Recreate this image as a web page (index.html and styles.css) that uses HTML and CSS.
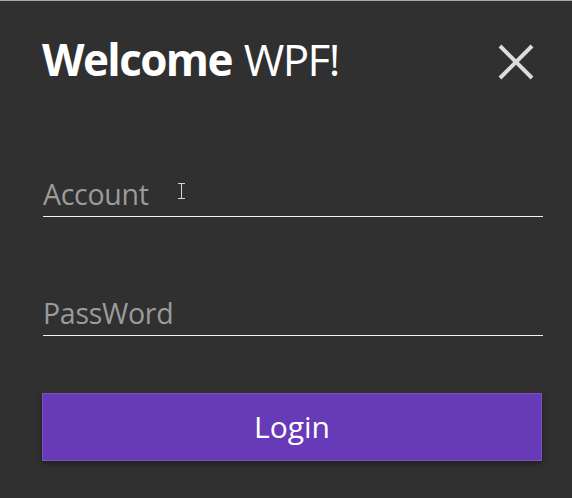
FILE: index.html
```html
<!DOCTYPE html>
<html>
<head>
<meta charset="utf-8">
<link rel="stylesheet" href="styles.css">
</head>
<body>
<div class="window">
  <div class="header">
    <h1 class="title"><b>Welcome</b> WPF!</h1>
    <button class="close" aria-label="Close">
      <svg width="36" height="36" viewBox="0 0 36 36"><path d="M2 2 L34 34 M34 2 L2 34" stroke="#dcdcdc" stroke-width="4" stroke-linecap="butt"/></svg>
    </button>
  </div>
  <div class="field field-account">
    <input class="input" type="text" placeholder="Account">
    <svg class="ibeam" width="7" height="16" viewBox="0 0 7 16"><path d="M0 0.5 H7 M0 15.5 H7 M3.5 0.5 V15.5" stroke="#d8d8d8" stroke-width="1" fill="none"/></svg>
  </div>
  <div class="field field-password">
    <input class="input" type="password" placeholder="PassWord">
  </div>
  <button class="login">Login</button>
</div>
</body>
</html>
```
FILE: styles.css
```css
html, body {
  margin: 0;
  padding: 0;
}
body {
  background: #303030;
  width: 572px;
  height: 498px;
  overflow: hidden;
  font-family: "Open Sans", "Noto Sans", sans-serif;
}
.window {
  border-top: 1px solid #a8a8a8;
  height: 497px;
  box-sizing: border-box;
  padding: 0 29px 0 42px;
}
.header {
  display: flex;
  justify-content: space-between;
  align-items: flex-start;
  padding-top: 29px;
}
.title {
  margin: 0;
  font-size: 44px;
  font-weight: 400;
  color: #ffffff;
  line-height: 59px;
  letter-spacing: -1.6px;
  word-spacing: 2px;
}
.title b {
  font-weight: 700;
}
.close {
  background: none;
  border: none;
  padding: 0;
  margin: 14px 9px 0 0;
  width: 36px;
  height: 36px;
  display: block;
}
.close svg {
  display: block;
}
.field {
  position: relative;
  border-bottom: 1px solid #f2f2f2;
  margin-left: 1px;
}
.field-account {
  margin-top: 82px;
}
.field-password {
  margin-top: 73px;
}
.input {
  display: block;
  width: 100%;
  box-sizing: border-box;
  background: transparent;
  border: none;
  outline: none;
  padding: 0;
  height: 45px;
  font-family: "Open Sans", "Noto Sans", sans-serif;
  font-size: 28.5px;
  letter-spacing: -0.3px;
  color: #ffffff;
}
.input::placeholder {
  color: #9b9b9b;
  opacity: 1;
}
.ibeam {
  position: absolute;
  left: 135px;
  top: 12px;
}
.login {
  display: block;
  width: 500px;
  height: 68px;
  margin-top: 57px;
  background: #673ab7;
  border: 1px solid #7a55c0;
  color: #ffffff;
  font-family: "Open Sans", "Noto Sans", sans-serif;
  font-size: 30px;
  box-shadow: 0 3px 5px rgba(0, 0, 0, 0.35);
  padding: 0 0 2px;
}
```
